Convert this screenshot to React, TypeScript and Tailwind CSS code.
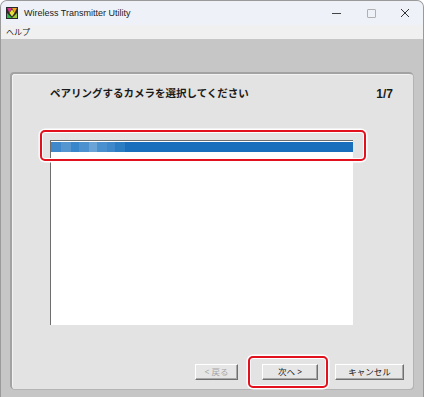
import React from "react";

const font = { fontFamily: '"Noto Sans", "Noto Sans CJK JP", sans-serif' };
const latin = { fontFamily: '"Liberation Sans", "Noto Sans CJK JP", sans-serif' };

const buttonClass =
  "flex h-[16px] items-center justify-center border border-t-white border-l-white border-r-[#707070] border-b-[#707070] bg-[#e6e6e6] text-[8.5px] leading-none shadow-[inset_-1px_-1px_0_#a8a8a8]";

function AppIcon() {
  return (
    <svg width="12" height="12" viewBox="0 0 12 12">
      <rect x="0" y="0" width="12" height="12" fill="#2a2a2a" />
      <polygon points="1,1 6,1 3.5,6" fill="#d8308e" />
      <polygon points="6,1 11,1 8.5,6" fill="#f3a21c" />
      <polygon points="1,11 1,6 6,11" fill="#32b44a" />
      <polygon points="11,11 6,11 11,6" fill="#9ac83c" />
      <polygon points="3.5,6 6,2.5 8.5,6 6,9.5" fill="#e7e23a" />
    </svg>
  );
}

export default function App() {
  return (
    <div style={font} className="flex h-[397px] w-[424px] flex-col overflow-hidden rounded-t-[7px] border-x border-t border-[#9a9a9a] bg-[#c6c6c6] text-[#1a1a1a]">
      {/* title bar */}
      <div className="flex h-[24px] items-center bg-[#eef2f8]">
        <div className="ml-[5px]">
          <AppIcon />
        </div>
        <span style={latin} className="ml-[6px] text-[9px] leading-none">Wireless Transmitter Utility</span>
        <div className="ml-auto flex h-full items-center">
          <div className="flex w-[34px] justify-center">
            <div className="h-px w-[9px] bg-[#444]" />
          </div>
          <div className="flex w-[36px] justify-center">
            <div className="h-[9px] w-[9px] rounded-[1px] border border-[#b0b0b0]" />
          </div>
          <div className="flex w-[34px] justify-center pr-[2px]">
            <svg width="10" height="10" viewBox="0 0 10 10">
              <path d="M1 1 L9 9 M9 1 L1 9" stroke="#333" strokeWidth="1" />
            </svg>
          </div>
        </div>
      </div>

      {/* menu bar */}
      <div className="flex h-[14px] items-center bg-[#f0f0f0] pl-[5px] text-[8px] leading-none">ヘルプ</div>

      {/* client area */}
      <div className="flex flex-1 flex-col pb-[8px] pl-[9px] pr-[10px] pt-[33px]">
        <div className="relative flex flex-1 flex-col rounded-[4px] border-l-2 border-t-2 border-l-[#a2a2a2] border-t-[#a2a2a2] bg-[#e3e3e3] shadow-[inset_1px_1px_0_#f2f2f2,1px_1px_0_#b4b4b4]">
          <div className="mt-[12px] flex h-[16px] items-center pl-[38px] pr-[20px] font-semibold">
            <span className="text-[10.5px]">ペアリングするカメラを選択してください</span>
            <span style={latin} className="ml-auto text-[12px] font-bold">1/7</span>
          </div>

          <div className="ml-[38px] mt-[38px] h-[185px] w-[303px] border-l border-t border-[#6e6e6e] bg-white pt-px">
            <div className="flex h-[10px] bg-[#1a6fbd]">
              <div className="w-[10px] bg-[#3e88cb]" />
              <div className="w-[10px] bg-[#5595d0]" />
              <div className="w-[8px] bg-[#3a86ca]" />
              <div className="w-[10px] bg-[#4d91cf]" />
              <div className="w-[8px] bg-[#6aa3d6]" />
              <div className="w-[10px] bg-[#4a8fce]" />
              <div className="w-[8px] bg-[#3d87ca]" />
              <div className="w-[10px] bg-[#2a7cc3]" />
            </div>
          </div>

          <div className="mt-[39px] flex pl-[183px]">
            <div className={`${buttonClass} w-[43px] text-[#a6a6a6]`}>&lt; 戻る</div>
            <div className={`${buttonClass} ml-[24px] w-[56px]`}>次へ &gt;</div>
            <div className={`${buttonClass} ml-[17px] w-[69px]`}>キャンセル</div>
          </div>

          {/* highlight overlays */}
          <div className="absolute left-[28px] top-[56px] h-[31px] w-[326px] rounded-[5px] border-2 border-[#e3101e] shadow-[0_0_0_1.5px_#ffffff,inset_0_0_0_1px_#ffffff]" />
          <div className="absolute left-[236px] top-[282px] h-[32px] w-[80px] rounded-[5px] border-2 border-[#e3101e] shadow-[0_0_0_1.5px_#ffffff,inset_0_0_0_1px_#ffffff]" />
        </div>
      </div>
    </div>
  );
}
